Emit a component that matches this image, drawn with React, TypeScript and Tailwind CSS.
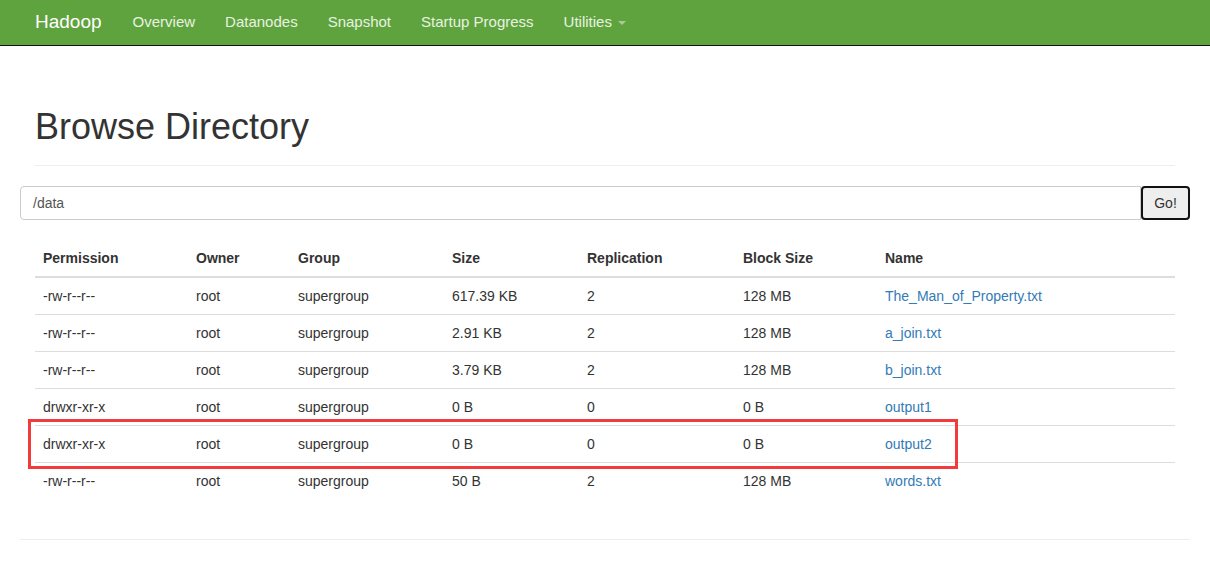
import React from "react";

const rows = [
  ["-rw-r--r--", "root", "supergroup", "617.39 KB", "2", "128 MB", "The_Man_of_Property.txt"],
  ["-rw-r--r--", "root", "supergroup", "2.91 KB", "2", "128 MB", "a_join.txt"],
  ["-rw-r--r--", "root", "supergroup", "3.79 KB", "2", "128 MB", "b_join.txt"],
  ["drwxr-xr-x", "root", "supergroup", "0 B", "0", "0 B", "output1"],
  ["drwxr-xr-x", "root", "supergroup", "0 B", "0", "0 B", "output2"],
  ["-rw-r--r--", "root", "supergroup", "50 B", "2", "128 MB", "words.txt"],
];

const widths = ["w-[153px]", "w-[102px]", "w-[154px]", "w-[135px]", "w-[156px]", "w-[142px]", ""];
const heads = ["Permission", "Owner", "Group", "Size", "Replication", "Block Size", "Name"];

export default function App() {
  return (
    <div className="min-h-[561px] bg-white text-[#333] font-['Liberation_Sans',Arial,sans-serif] text-[14px]">
      <nav className="h-[46px] bg-[#5fa33e] border-b border-[#111] flex items-center pl-[35px]">
        <span className="text-white text-[19px] mr-[31px]">Hadoop</span>
        <div className="flex items-center gap-[30px] text-[#e8f2e0] text-[15px]">
          <span>Overview</span>
          <span>Datanodes</span>
          <span>Snapshot</span>
          <span>Startup Progress</span>
          <span className="flex items-center gap-[6px]">
            Utilities
            <span className="inline-block w-0 h-0 border-l-[4px] border-r-[4px] border-t-[4px] border-l-transparent border-r-transparent border-t-[#a9c99a]" />
          </span>
        </div>
      </nav>

      <div className="px-[20px]">
        <div className="px-[15px]">
          <h1 className="text-[36px] leading-[40px] pt-[61px] pb-[18px] border-b border-[#eee] text-[#333]">
            Browse Directory
          </h1>
        </div>

        <div className="flex mt-[20px] h-[34px]">
          <div className="flex-1 border border-[#ccc] rounded-l-[4px] flex items-center px-[12px] pt-[1px] text-[#555]">
            /data
          </div>
          <button className="w-[49px] border-2 border-[#111] rounded-[4px] bg-[#eee] text-[#333] text-[14px]">
            Go!
          </button>
        </div>

        <div className="px-[15px] mt-[20px] relative">
          <table className="w-full border-collapse">
            <thead>
              <tr>
                {heads.map((h, i) => (
                  <th
                    key={h}
                    className={`${widths[i]} text-left font-bold px-[8px] py-[8px] leading-[20px] border-b-2 border-[#ddd]`}
                  >
                    {h}
                  </th>
                ))}
              </tr>
            </thead>
            <tbody>
              {rows.map((r, ri) => (
                <tr key={ri}>
                  {r.map((c, ci) => (
                    <td
                      key={ci}
                      className={`px-[8px] py-[8px] leading-[20px] ${ri > 0 ? "border-t border-[#ddd]" : ""} ${ci === 6 ? "text-[#337ab7]" : ""}`}
                    >
                      {c}
                    </td>
                  ))}
                </tr>
              ))}
            </tbody>
          </table>
          <div className="absolute left-[8px] top-[179px] w-[930px] h-[50px] border-[3px] border-[#f23c3c] pointer-events-none" />
        </div>

        <div className="mt-[40px] border-b border-[#eee]" />
      </div>
    </div>
  );
}
